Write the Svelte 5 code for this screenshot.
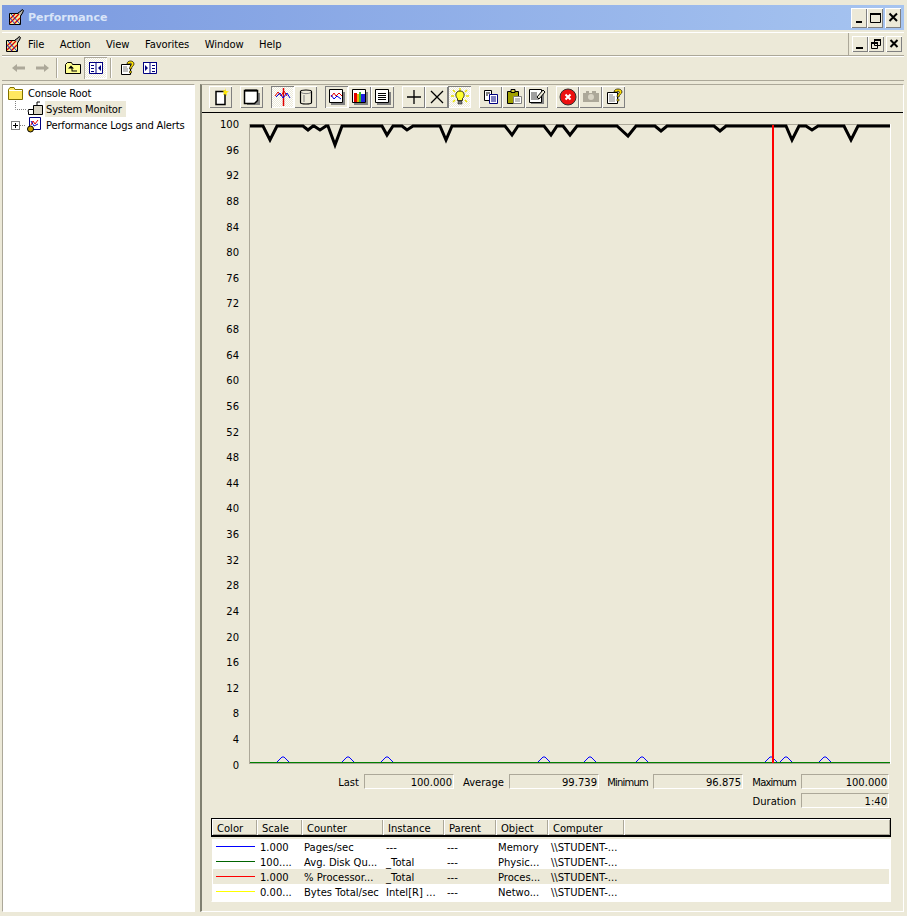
<script>
	const yLabels = [];
	for (let v = 100; v >= 0; v -= 4) yLabels.push(v);

	// graph sample dips: start x, bottom x, bottom y, end x
	const dips = [
		[263, 270, 140, 277], [303, 308, 130, 313], [314, 320, 130, 326], [328, 335, 145, 342],
		[382, 387, 135, 393], [402, 407, 130, 413], [440, 446, 140, 452], [505, 512, 135, 518],
		[544, 551, 135, 557], [563, 570, 135, 577], [617, 628, 136, 636], [655, 661, 131, 667],
		[714, 720, 131, 726], [786, 792, 140, 799], [806, 812, 130, 818], [844, 851, 140, 858]
	];
	const cpu = '250,126 ' + dips.map((d) => `${d[0]},126 ${d[1]},${d[2]} ${d[3]},126`).join(' ') + ' 890,126';
	const bumps = [283, 348, 387, 544, 590, 642, 771, 786, 825];

	const headWidths = [45, 45, 81, 61, 52, 52, 76];
	const widths = [45, 44, 82, 61, 51, 53, 76];
	const columns = ['Color', 'Scale', 'Counter', 'Instance', 'Parent', 'Object', 'Computer'];
	const rows = [
		{ color: '#0000ff', scale: '1.000', counter: 'Pages/sec', instance: '---', parent: '---', object: 'Memory' },
		{ color: '#006400', scale: '100....', counter: 'Avg. Disk Qu...', instance: '_Total', parent: '---', object: 'Physic...' },
		{ color: '#ff0000', scale: '1.000', counter: '% Processor...', instance: '_Total', parent: '---', object: 'Proces...', selected: true },
		{ color: '#ffff00', scale: '0.00...', counter: 'Bytes Total/sec', instance: 'Intel[R] ...', parent: '---', object: 'Netwo...' }
	];
</script>

{#snippet appIcon()}
	<svg width="16" height="17" viewBox="0 0 16 17">
		<path d="M1.500 4.500h11v11h-11z" fill="#f6ee9a" stroke="#000" />
		<path d="M2 14l9-9M2 10l5-5M6 15l6-6" stroke="#e00000" stroke-width="1.300" fill="none" />
		<path d="M3 5l9 10M2 9l5 6" stroke="#1830c8" fill="none" />
		<path d="M10 4l3-2 1-1.500 1.500 1-1 2.500-2 3" fill="#b0b0a8" stroke="#000" />
	</svg>
{/snippet}

<div class="window">
	<header class="titlebar">
		<span class="ticon">{@render appIcon()}</span>
		<span class="title">Performance</span>
		<div class="caption">
			<button class="cbtn" aria-label="Minimize"><svg width="15" height="15" viewBox="0 0 15 15"><path d="M4 11h6v2H4z" /></svg></button>
			<button class="cbtn" aria-label="Maximize"><svg width="15" height="15" viewBox="0 0 15 15"><path d="M2.500 3.500h10v9h-10z" fill="none" stroke="#000" /><path d="M2 3h11v2H2z" /></svg></button>
			<button class="cbtn gap" aria-label="Close"><svg width="15" height="15" viewBox="0 0 15 15"><path d="M3.500 3.500l7.500 7.500M11 3.500l-7.500 7.500" stroke="#000" stroke-width="2" fill="none" /></svg></button>
		</div>
	</header>

	<div class="menubar">
		<span class="micon">{@render appIcon()}</span>
		<nav class="menus">
			<span>File</span><span>Action</span><span>View</span><span>Favorites</span><span>Window</span><span>Help</span>
		</nav>
		<div class="mdi">
			<button class="cbtn small" aria-label="Minimize"><svg width="14" height="14" viewBox="0 0 14 14"><path d="M3 10h7v2H3z" /></svg></button>
			<button class="cbtn small" aria-label="Restore"><svg width="14" height="14" viewBox="0 0 14 14"><path d="M5.500 2.500h6v6h-6zM2.500 5.500h6v6h-6z" fill="#ece9d8" stroke="#000" /><path d="M5 2h7v2H5zM2 5h7v2H2z" /></svg></button>
			<button class="cbtn small gap" aria-label="Close"><svg width="14" height="14" viewBox="0 0 14 14"><path d="M3.500 3l7 7M10.500 3l-7 7" stroke="#000" stroke-width="2" fill="none" /></svg></button>
		</div>
	</div>

	<div class="toolbar">
		<button class="tb flat" aria-label="Back"><svg width="16" height="16" viewBox="0 0 16 16"><path d="M1 8l5-4v2.500h8v3H6V12z" fill="#aca899" /></svg></button>
		<button class="tb flat" aria-label="Forward"><svg width="16" height="16" viewBox="0 0 16 16"><path d="M15 8l-5-4v2.500H2v3h8V12z" fill="#aca899" /></svg></button>
		<i class="sep"></i>
		<button class="tb flat" aria-label="Up"><svg width="16" height="16" viewBox="0 0 16 16"><path d="M.5 4.500l2-2h4l1 2h8v9H.5z" fill="#ffff90" stroke="#000" /><path d="M6 5.500l3 3H7.500v2H12v1H6.500v-3H3z" fill="#000" /></svg></button>
		<button class="tb pressed" aria-label="Show tree"><svg width="16" height="16" viewBox="0 0 16 16"><path d="M1.500 2.500h13v11h-13zM8 2.500v11" fill="#fff" stroke="#000080" /><path d="M1 2h14v1H1zM3 5h3v1H3zM3 8h3v1H3zM3 11h3v1H3zM13 5v6l-3-3z" fill="#000080" /></svg></button>
		<i class="sep"></i>
		<button class="tb flat" aria-label="Help"><svg width="16" height="16" viewBox="0 0 16 16"><path d="M2.500 4.500h9v10h-9z" fill="#fff" stroke="#000" /><path d="M4 7h4M4 9h5M4 11h5" stroke="#808080" /><path d="M8 4c0-4 7-4 7 0 0 2-2.500 2-2.500 5h-2c0-3 2-3.500 2-5 0-1-2-1-2 0z" fill="#ffe000" stroke="#000" stroke-width=".7" /><path d="M10.500 11h2v2h-2z" fill="#ffe000" stroke="#000" stroke-width=".5" /></svg></button>
		<button class="tb flat" aria-label="Show action pane"><svg width="16" height="16" viewBox="0 0 16 16"><path d="M1.500 2.500h13v11h-13zM8 2.500v11" fill="#fff" stroke="#000080" /><path d="M1 2h14v1H1zM10 5h3v1h-3zM10 8h3v1h-3zM10 11h3v1h-3zM3 5v6l3-3z" fill="#000080" /></svg></button>
	</div>

	<main class="panes">
		<aside class="tree">
			<div class="node root">
				<svg width="15" height="13" viewBox="0 0 15 13"><path d="M.5 2.500l1.500-2h4l1 2h7.500v10H.5z" fill="#ffe860" stroke="#807000" /><path d="M1 3.500h13" stroke="#fff" /></svg>
				<span>Console Root</span>
			</div>
			<div class="node child">
				<svg class="conn" width="12" height="16" viewBox="0 0 12 16"><path d="M.5 0v8.500H12" stroke="#808080" stroke-dasharray="1 1" fill="none" /></svg>
				<svg width="16" height="16" viewBox="0 0 16 16"><path d="M6.500 4.500h9v9h-9z" fill="#d8d4c4" stroke="#000" /><path d="M1.500 8.500h5v5h-5z" fill="#fff" stroke="#000" /><path d="M10 4V1h3" fill="none" stroke="#000" /><path d="M0 10h2" stroke="#808080" /></svg>
				<span class="sel">System Monitor</span>
			</div>
			<div class="node child">
				<span class="plus"></span>
				<svg class="conn short" width="6" height="16" viewBox="0 0 6 16"><path d="M0 8.500h6" stroke="#808080" stroke-dasharray="1 1" /></svg>
				<svg width="16" height="16" viewBox="0 0 16 16"><path d="M3.500 .5h11v12h-11z" fill="#fff" stroke="#000080" /><path d="M5 8l2-4 2 3 3-4" fill="none" stroke="#e00000" /><path d="M5 4l3 5 4-2" fill="none" stroke="#0000d0" /><circle cx="4.500" cy="12" r="3" fill="#c8a000" stroke="#000" /></svg>
				<span class="lbl">Performance Logs and Alerts</span>
			</div>
		</aside>

		<section class="monitor">
			<div class="mtools">
				<div class="group">
					<button class="tb2" aria-label="New counter set"><svg width="16" height="18" viewBox="0 0 16 18"><path d="M3 3.500h9v13H3z" fill="#fff" stroke="#000" stroke-width="1.500" /><path d="M12 0l1 3 3 .5-2.500 1.500.5 3-2-2-2 1 1-3-2-1.500 3 0z" fill="#ffe800" /></svg></button>
				</div>
				<div class="group">
					<button class="tb2" aria-label="Clear display"><svg width="18" height="18" viewBox="0 0 18 18"><path d="M4 5h13v12H4z" fill="#808080" /><path d="M1.500 2.500h13v10l-3 3h-10z" fill="#fff" stroke="#000" stroke-width="1.500" /><path d="M3 1v3M5 1v3M7 1v3M9 1v3M11 1v3M13 1v3" stroke="#000" stroke-dasharray="1 1" /></svg></button>
				</div>
				<div class="group">
					<button class="tb2 pressed" aria-label="View current activity"><svg width="18" height="18" viewBox="0 0 18 18"><path d="M9.500 0v18" stroke="#e00000" stroke-width="1.500" /><path d="M1 8l3-4 3 4 3-5 3 5" fill="none" stroke="#e00000" /><path d="M2 9l4-4 3 5 4-5 3 5" fill="none" stroke="#0000e0" /></svg></button>
					<button class="tb2" aria-label="View log data"><svg width="16" height="18" viewBox="0 0 16 18"><path d="M2.500 3.500c0-2 11-2 11 0v11c0 2-11 2-11 0z" fill="#ece9d8" stroke="#000" stroke-width="1.200" /><path d="M3 4.500c2 1.500 8 1.500 10 0M6 7v7" stroke="#808080" fill="none" /></svg></button>
				</div>
				<div class="group">
					<button class="tb2 raised-p" aria-label="View graph"><svg width="18" height="18" viewBox="0 0 18 18"><path d="M3 4h14v13H3z" fill="#808080" /><path d="M1.500 1.500h13v13h-13z" fill="#fff" stroke="#000" /><path d="M3 9l3-4 2 3 3-3 3 3" stroke="#e00000" fill="none" /><path d="M3 7l3 4 3-3 4 3" stroke="#0000e0" fill="none" /><path d="M3 1v1M5 1v1M7 1v1M9 1v1M11 1v1M13 1v1" stroke="#000" /></svg></button>
					<button class="tb2" aria-label="View histogram"><svg width="18" height="18" viewBox="0 0 18 18"><path d="M3 4h14v13H3z" fill="#808080" /><path d="M1.500 1.500h13v13h-13z" fill="#fff" stroke="#000" /><path d="M3 5h3v9H3z" fill="#e00000" /><path d="M6 6h2v8H6z" fill="#f0b000" /><path d="M8 4h2v10H8z" fill="#30c030" /><path d="M10 6h4v8h-4z" fill="#2020e0" /></svg></button>
					<button class="tb2" aria-label="View report"><svg width="18" height="18" viewBox="0 0 18 18"><path d="M3 4h14v13H3z" fill="#808080" /><path d="M1.500 1.500h13v13h-13z" fill="#fff" stroke="#000" /><path d="M4 5h8v1H4zM4 7h8v1H4zM4 9h8v1H4zM4 11h8v1H4z" /></svg></button>
				</div>
				<div class="group">
					<button class="tb2" aria-label="Add"><svg width="16" height="16" viewBox="0 0 16 16"><path d="M8 1v14M1 8h14" stroke="#000" stroke-width="1.300" /></svg></button>
					<button class="tb2" aria-label="Delete"><svg width="16" height="16" viewBox="0 0 16 16"><path d="M2 2l12 12M14 2L2 14" stroke="#000" stroke-width="1.300" /></svg></button>
					<button class="tb2 pressed" aria-label="Highlight"><svg width="18" height="18" viewBox="0 0 18 18"><path d="M9 0L9 3M2 2l2 2M16 2l-2 2M0 8h3M15 8h3M2 14l2-2M16 14l-2-2" stroke="#e8e000" stroke-width="1.500" /><path d="M9 3c-5 0-5 5.500-2.500 7.500v2h5v-2c2.500-2 2.500-7.500-2.500-7.500z" fill="#ffff30" stroke="#000" stroke-width=".8" /><path d="M7 13.500h4v2.500H7z" fill="#808080" stroke="#000" stroke-width=".5" /></svg></button>
				</div>
				<div class="group">
					<button class="tb2" aria-label="Copy"><svg width="18" height="18" viewBox="0 0 18 18"><path d="M2.500 2.500h7v10h-7z" fill="#fff" stroke="#000" /><path d="M7.500 6.500h8v9h-8z" fill="#fff" stroke="#000080" /><path d="M9 9h5M9 11h5M9 13h5" stroke="#000080" /><path d="M4 5h4M4 7h2" stroke="#000" /></svg></button>
					<button class="tb2" aria-label="Paste"><svg width="18" height="18" viewBox="0 0 18 18"><path d="M2.500 3.500h11v12h-11z" fill="#a0a000" stroke="#000" /><path d="M6 1.500h4v3H6z" fill="#d8d040" stroke="#000" /><path d="M8.500 8.500h8v7h-8z" fill="#fff" stroke="#808080" /><path d="M10 11h5M10 13h5" stroke="#808080" /></svg></button>
					<button class="tb2" aria-label="Properties"><svg width="18" height="18" viewBox="0 0 18 18"><path d="M3 3h13v13H3z" fill="#808080" /><path d="M1.500 1.500h12v13h-12z" fill="#fff" stroke="#000" /><path d="M3 5h6M3 7h6M3 9h6M3 11h8" stroke="#404040" /><path d="M9 9l6-7 2 2-6 7z" fill="#ece9d8" stroke="#000" /></svg></button>
				</div>
				<div class="group">
					<button class="tb2" aria-label="Freeze"><svg width="18" height="18" viewBox="0 0 18 18"><circle cx="9" cy="9" r="8" fill="#ec1010" stroke="#303030" /><path d="M6.500 6.500l5 5M11.500 6.500l-5 5" stroke="#fff" stroke-width="2" /></svg></button>
					<button class="tb2" aria-label="Update" disabled><svg width="18" height="18" viewBox="0 0 18 18"><path d="M1 5h16v9H1z" fill="#aca899" /><path d="M4 3h3v2H4zM10 3h4v2h-4z" fill="#aca899" /><circle cx="9" cy="9" r="3" fill="#d8d4c4" /></svg></button>
					<button class="tb2" aria-label="Help"><svg width="18" height="18" viewBox="0 0 18 18"><path d="M2.500 4.500h10v11h-10z" fill="#fff" stroke="#000" /><path d="M4 7h4M4 9h6M4 11h6M4 13h6" stroke="#808080" /><path d="M9 4c0-4 8-4 8 0 0 2-3 2-3 5h-2c0-3 2.500-3.500 2.500-5 0-1-3-1-3 0z" fill="#ffe000" stroke="#000" stroke-width=".7" /><path d="M12 11h2v2h-2z" fill="#ffe000" stroke="#000" stroke-width=".5" /></svg></button>
				</div>
			</div>

			<div class="graph">
				<div class="yaxis">
					{#each yLabels as v}<span>{v}</span>{/each}
				</div>
				<svg class="plot" width="642" height="640" viewBox="249 124 642 640">
					<rect x="249.500" y="124.500" width="641" height="639" fill="none" stroke="#aca899" />
					<path d="M890.500 124v640" stroke="#fff" />
					{#each bumps as b}
						<polyline points="{b - 6},762 {b - 3},759 {b - 1},757 {b + 1},757 {b + 3},759 {b + 6},762" fill="none" stroke="#0000ff" />
					{/each}
					<path d="M250 762.500h640" stroke="#008000" />
					<polyline points={cpu} fill="none" stroke="#000" stroke-width="3" stroke-linejoin="miter" />
					<path d="M773 125v638" stroke="#ff0000" stroke-width="2" />
				</svg>
			</div>

			<div class="stats">
				<label for="s-last">Last</label><output id="s-last">100.000</output>
				<label for="s-avg">Average</label><output id="s-avg">99.739</output>
				<label class="wide" for="s-min">Minimum</label><output id="s-min">96.875</output>
				<label class="wide" for="s-max">Maximum</label><output id="s-max">100.000</output>
				<label class="dur" for="s-dur">Duration</label><output id="s-dur">1:40</output>
			</div>

			<div class="legend">
				<div class="lhead">
					{#each columns as c, i}
						<span class="lcol" style="width:{headWidths[i]}px">{c}</span>
					{/each}
					<span class="lcol rest"></span>
				</div>
				<div class="lbody">
					{#each rows as r}
						<div class="lrow" class:selected={r.selected}>
							<span class="cell" style="width:{widths[0]}px"><i class="swatch" style="background:{r.color}"></i></span>
							<span class="cell" style="width:{widths[1]}px">{r.scale}</span>
							<span class="cell" style="width:{widths[2]}px">{r.counter}</span>
							<span class="cell" style="width:{widths[3]}px">{r.instance}</span>
							<span class="cell" style="width:{widths[4]}px">{r.parent}</span>
							<span class="cell" style="width:{widths[5]}px">{r.object}</span>
							<span class="cell" style="width:{widths[6]}px">\\STUDENT-...</span>
						</div>
					{/each}
				</div>
			</div>
		</section>
	</main>
</div>

<style>
	:global(body) {
		background: #ece9d8;
	}
	.window {
		width: 907px;
		height: 916px;
		box-sizing: border-box;
		padding: 5px 3px 4px 2px;
		display: flex;
		flex-direction: column;
		overflow: hidden;
		background: #ece9d8;
		font-family: "DejaVu Sans", sans-serif;
		font-size: 10px;
		color: #000;
	}
	button {
		padding: 0;
		border: 0;
		background: none;
		display: flex;
		align-items: center;
		justify-content: center;
	}
	.titlebar {
		height: 25px;
		flex: none;
		display: flex;
		align-items: center;
		padding: 0 3px 0 6px;
		background: linear-gradient(90deg, #7b9ae0, #a6c4f0);
	}
	.ticon {
		height: 17px;
		margin-right: 4px;
	}
	.title {
		color: #d8e4f8;
		font-weight: 700;
		font-size: 11px;
		flex: 1;
	}
	.caption,
	.mdi {
		display: flex;
	}
	.cbtn {
		width: 16px;
		height: 20px;
		background: #ece9d8;
		box-shadow: inset 1px 1px #fff, inset -1px -1px #808080;
	}
	.cbtn.small {
		height: 16px;
	}
	.gap {
		margin-left: 2px;
	}
	.menubar {
		margin-top: 2px;
		height: 22px;
		padding: 1px 2px 0 3px;
		flex: none;
		display: flex;
		align-items: center;
		border-bottom: 1px solid #aca899;
		box-shadow: inset 0 1px #fff;
	}
	.micon {
		height: 17px;
		margin-right: 7px;
	}
	.menus {
		flex: 1;
		display: flex;
		gap: 15.500px;
		letter-spacing: -0.1px;
	}
	.mdi {
		padding: 0 0 0 3px;
		border-left: 1px solid #aca899;
		height: 22px;
		align-items: center;
	}
	.toolbar {
		height: 24px;
		flex: none;
		display: flex;
		align-items: center;
		padding-left: 5px;
		border-bottom: 1px solid #aca899;
		box-shadow: inset 0 1px #fff;
	}
	.tb {
		width: 23px;
		height: 22px;
	}
	.tb.pressed {
		background: repeating-conic-gradient(#fff 0 25%, #ece9d8 0 50%) 0 0 / 2px 2px;
		box-shadow: inset 1px 1px #aca899, inset -1px -1px #fff;
	}
	.sep {
		width: 2px;
		height: 20px;
		margin: 0 3px;
		background: linear-gradient(90deg, #aca899 50%, #fff 50%);
	}
	.panes {
		flex: 1;
		min-height: 0;
		display: flex;
		margin-top: 3px;
		gap: 5px;
	}
	.tree {
		width: 193px;
		flex: none;
		box-sizing: border-box;
		background: #fff;
		border: 1px solid;
		border-color: #aca899 #fff #fff #aca899;
		padding: 0 0 0 5px;
		letter-spacing: -0.2px;
	}
	.node {
		height: 16px;
		display: flex;
		align-items: center;
	}
	.root svg {
		margin-right: 5px;
		margin-left: 0;
	}
	.child {
		margin-left: 3px;
	}
	.conn {
		margin-left: 4px;
		flex: none;
	}
	.conn.short {
		margin-left: 0;
	}
	.sel {
		background: #ece9d8;
		height: 16px;
		line-height: 18px;
		padding: 0 4px 0 1px;
		margin-left: 2px;
	}
	.lbl {
		margin-left: 4px;
		white-space: nowrap;
	}
	.plus {
		box-sizing: border-box;
		width: 9px;
		height: 9px;
		flex: none;
		border: 1px solid #808080;
		background:
			linear-gradient(#000, #000) center / 5px 1px no-repeat,
			linear-gradient(#000, #000) center / 1px 5px no-repeat,
			#fff;
	}
	.monitor {
		flex: 1;
		min-width: 0;
		box-sizing: border-box;
		border: 1px solid;
		border-color: #aca899 #fff #fff #808070;
		border-left-width: 2px;
		display: flex;
		flex-direction: column;
	}
	.mtools {
		height: 24px;
		flex: none;
		display: flex;
		gap: 8px;
		padding: 0 0 3px 7px;
		border-bottom: 1px solid #000;
		align-items: center;
	}
	.group {
		display: flex;
	}
	.tb2 {
		width: 23px;
		height: 22px;
		box-shadow: inset 1px 1px #fff, inset -1px -1px #808080;
	}
	.tb2.pressed {
		background: repeating-conic-gradient(#fff 0 25%, #ece9d8 0 50%) 0 0 / 2px 2px;
		box-shadow: inset 1px 1px #808080, inset -1px -1px #fff;
	}
	.tb2.raised-p {
		box-shadow: inset 1px 1px #808080, inset -1px -1px #fff;
	}
	.graph {
		flex: none;
		display: flex;
		padding-top: 11px;
		height: 661px;
		box-sizing: border-box;
	}
	.yaxis {
		width: 37px;
		margin: -6px 10px 0 0;
		height: 654px;
		display: flex;
		flex-direction: column;
		justify-content: space-between;
		align-items: flex-end;
		line-height: 13px;
	}
	.plot {
		display: block;
		flex: none;
	}
	.stats {
		display: grid;
		grid-template-columns: 162px 90px 55px 90px 54px 90px 58px 88px;
		grid-auto-rows: 15px;
		row-gap: 4px;
	}
	.stats label {
		text-align: right;
		padding-right: 5px;
		height: 15px;
		line-height: 17px;
	}
	.stats .wide {
		letter-spacing: -0.8px;
	}
	.stats .dur {
		grid-column: 7;
	}
	.stats output {
		box-sizing: border-box;
		height: 15px;
		line-height: 15px;
		text-align: right;
		padding-right: 1px;
		border: 1px solid;
		border-color: #aca899 #fff #fff #aca899;
	}
	.legend {
		margin: 10px 12px 0 9px;
	}
	.lhead {
		display: flex;
		height: 19px;
		box-sizing: border-box;
		border: 1px solid #000;
		border-bottom-width: 2px;
	}
	.lcol {
		box-sizing: border-box;
		line-height: 19px;
		padding-left: 5px;
		box-shadow: inset 1px 1px #fff, inset -1px -1px #aca899;
	}
	.rest {
		flex: 1;
	}
	.lbody {
		margin-top: 1px;
		padding: 0 1px 2px 1px;
		border: 1px solid;
		border-color: #ece9d8 #fff #fff #ece9d8;
		background: #fff;
	}
	.lrow {
		height: 15px;
		display: flex;
		line-height: 17px;
		white-space: nowrap;
	}
	.lrow.selected {
		background: #ece9d8;
	}
	.cell {
		box-sizing: border-box;
		padding-left: 2px;
		height: 15px;
		overflow: hidden;
		display: flex;
		align-items: flex-start;
	}
	.swatch {
		display: block;
		width: 39px;
		height: 1px;
		margin: 7px 0 0 1px;
	}
</style>
